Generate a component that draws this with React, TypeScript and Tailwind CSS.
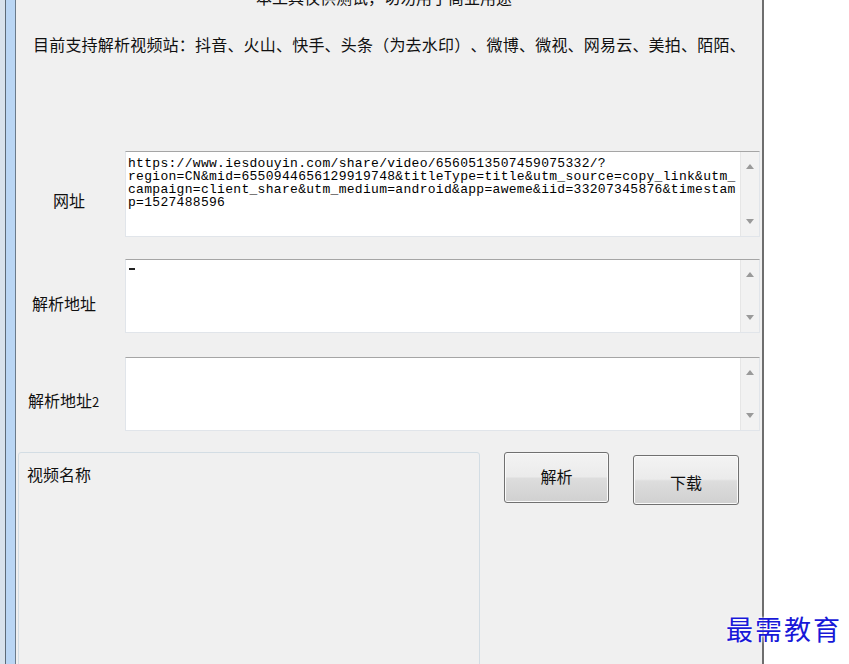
import React from 'react';

const cjk = "font-['Noto_Sans_CJK_SC','Noto_Sans_CJK_JP',sans-serif]";

const ScrollBar = () => (
  <div className="w-[19px] shrink-0 bg-[#f2f2f2] border-l border-[#e6e6e6] flex flex-col items-center justify-between py-[12px]">
    <svg width="8" height="5" viewBox="0 0 8 5">
      <polygon points="4,0 8,5 0,5" fill="#9a9a9a" />
    </svg>
    <svg width="8" height="5" viewBox="0 0 8 5">
      <polygon points="0,0 8,0 4,5" fill="#9a9a9a" />
    </svg>
  </div>
);

const TextBox = ({ height, children }: { height: string; children?: React.ReactNode }) => (
  <div className={`w-[635px] ${height} flex bg-white border border-[#e1e5ea] border-t-[#a5a5a5]`}>
    <div className="flex-1 min-w-0 pl-[2px] pt-[5px] overflow-hidden">{children}</div>
    <ScrollBar />
  </div>
);

const urlLines = [
  'https://www.iesdouyin.com/share/video/6560513507459075332/?',
  'region=CN&mid=6550944656129919748&titleType=title&utm_source=copy_link&utm_',
  'campaign=client_share&utm_medium=android&app=aweme&iid=33207345876&timestam',
  'p=1527488596',
];

const App = () => {
  return (
    <div className={`relative w-[849px] h-[664px] overflow-hidden bg-white flex ${cjk} text-[#111] [text-spacing-trim:space-all]`}>
      {/* window frame, left */}
      <div className="w-[5px] bg-[#d8e2ec]" />
      <div className="w-[1px] bg-[#5d6b78]" />
      <div className="w-[9px] bg-[#bad6f4]" />
      <div className="w-[1px] bg-[#6b7b8b]" />

      {/* form surface */}
      <div className="w-[746px] h-full bg-[#f0f0f0] overflow-hidden flex flex-col">
        <div className="-mt-[11px] h-[16px] text-[16px] leading-[16px] pl-[240px] whitespace-nowrap">
          本工具仅供测试，切勿用于商业用途
        </div>
        <div className="mt-[31px] h-[16px] text-[16px] leading-[16px] pl-[17px] tracking-[0.2px] whitespace-nowrap">
          目前支持解析视频站：抖音、火山、快手、头条（为去水印）、微博、微视、网易云、美拍、陌陌、
        </div>

        <div className="mt-[99px] flex">
          <div className="w-[109px] shrink-0 pl-[37px] pt-[41px] text-[16px] leading-[16px]">网址</div>
          <TextBox height="h-[86px]">
            <div className="font-['Liberation_Mono',monospace] text-[13px] tracking-[0.3px] leading-[13px] whitespace-pre text-black">
              {urlLines.map((l) => (
                <div key={l}>{l}</div>
              ))}
            </div>
          </TextBox>
        </div>

        <div className="mt-[22px] flex">
          <div className="w-[109px] shrink-0 pl-[16px] pt-[36px] text-[16px] leading-[16px]">解析地址</div>
          <TextBox height="h-[74px]">
            <div className="mt-[3px] ml-[1px] w-[6px] h-[2px] bg-[#222]" />
          </TextBox>
        </div>

        <div className="mt-[24px] flex">
          <div className="w-[109px] shrink-0 pl-[12px] pt-[35px] text-[16px] leading-[16px] whitespace-nowrap">
            解析地址<span className="text-[13px]">2</span>
          </div>
          <TextBox height="h-[74px]" />
        </div>

        <div className="mt-[21px] flex items-start">
          <div className="ml-[2px] w-[462px] h-[230px] shrink-0 border border-[#d3dde4] rounded-[3px] pl-[8px] pt-[13px] text-[16px] leading-[16px]">
            视频名称
          </div>
          <button className="ml-[24px] w-[105px] h-[51px] rounded-[3px] border border-[#707070] bg-[linear-gradient(to_bottom,#f3f3f3_0%,#ebebeb_48%,#dddddd_52%,#d0d0d0_100%)] shadow-[inset_0_0_0_1px_#fafafa] text-[16px] leading-[16px] pb-[4px]">
            解析
          </button>
          <button className="ml-[24px] mt-[3px] w-[106px] h-[50px] rounded-[3px] border border-[#707070] bg-[linear-gradient(to_bottom,#f3f3f3_0%,#ebebeb_48%,#dddddd_52%,#d0d0d0_100%)] shadow-[inset_0_0_0_1px_#fafafa] text-[16px] leading-[16px] pt-[3px]">
            下载
          </button>
        </div>
      </div>

      {/* window frame, right */}
      <div className="w-[2px] h-full bg-[#6e6e6e]" />
      <div className="flex-1 bg-white" />

      {/* watermark */}
      <div className="absolute left-[726px] top-[616px] text-[27px] leading-[30px] tracking-[2px] text-[#1818d8] font-['Liberation_Serif','Noto_Sans_CJK_SC',serif] [text-shadow:0_0_2px_#fff,0_0_3px_#fff]">
        最需教育
      </div>
    </div>
  );
};

export default App;
